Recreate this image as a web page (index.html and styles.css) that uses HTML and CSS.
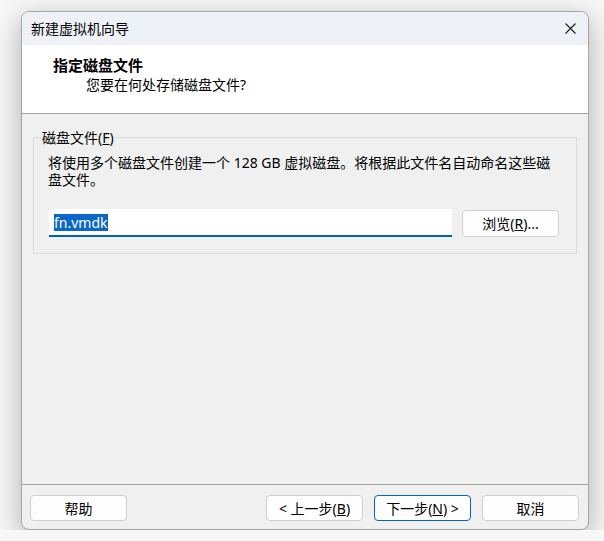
FILE: index.html
```html
<!DOCTYPE html>
<html lang="zh-CN">
<head>
    <meta charset="UTF-8">
    <title>新建虚拟机向导</title>
    <link rel="stylesheet" href="styles.css">
</head>
<body>
    <div class="window">
        <div class="titlebar">
            <span class="title">新建虚拟机向导</span>
            <svg class="close" width="11" height="11" viewBox="0 0 11 11">
                <path d="M0.5 0.5 L10.5 10.5 M10.5 0.5 L0.5 10.5" stroke="#1a1a1a" stroke-width="1.1" fill="none"/>
            </svg>
        </div>
        <div class="header">
            <div class="header-title">指定磁盘文件</div>
            <div class="header-sub">您要在何处存储磁盘文件?</div>
        </div>
        <div class="content">
            <fieldset class="group">
                <legend>磁盘文件(<u>F</u>)</legend>
                <p class="desc">将使用多个磁盘文件创建一个 128 GB 虚拟磁盘。将根据此文件名自动命名这些磁盘文件。</p>
                <div class="file-row">
                    <div class="file-input"><span class="sel">fn.vmdk</span></div>
                    <button class="btn">浏览(<u>R</u>)...</button>
                </div>
            </fieldset>
        </div>
        <div class="footer">
            <button class="btn">帮助</button>
            <div class="nav">
                <button class="btn">&lt; 上一步(<u>B</u>)</button>
                <button class="btn primary">下一步(<u>N</u>) &gt;</button>
                <button class="btn">取消</button>
            </div>
        </div>
    </div>
</body>
</html>
```

FILE: styles.css
```css
body {
    margin: 0;
    background-color: #f7f7f7;
    font-family: "Noto Sans", "Noto Sans CJK SC", sans-serif;
    font-size: 14px;
    color: #000;
}
.window {
    margin: 11px 0 0 21px;
    width: 568px;
    height: 519px;
    box-sizing: border-box;
    border: 1px solid #a6a6a6;
    border-radius: 8px;
    background-color: #f0f0f0;
    box-shadow: 0 8px 28px rgba(0, 0, 0, 0.3);
    display: flex;
    flex-direction: column;
    overflow: hidden;
}
.titlebar {
    height: 33px;
    flex: none;
    display: flex;
    align-items: center;
    justify-content: space-between;
    padding: 0 12px 0 9px;
    background-color: #eef2f7;
}
.title {
    line-height: 17px;
}
.header {
    height: 69px;
    box-sizing: border-box;
    flex: none;
    background-color: #fff;
    border-bottom: 1px solid #a0a0a0;
    padding: 11px 0 0 31px;
}
.header-title {
    font-size: 15px;
    font-weight: bold;
    line-height: 18px;
}
.header-sub {
    margin: 2px 0 0 33px;
    line-height: 18px;
}
.content {
    flex: 1;
    padding: 0 11px;
}
.group {
    margin: 15px 0 0 0;
    padding: 8px 17px 16px 14px;
    border: 1px solid #dcdcdc;
    min-inline-size: 0;
}
.group legend {
    padding: 0 1px;
    margin-left: -7px;
    line-height: 17px;
}
.desc {
    margin: 0 4px 0 0;
    line-height: 17px;
}
.file-row {
    display: flex;
    align-items: flex-end;
    gap: 10px;
    margin-top: 21px;
}
.file-input {
    width: 403px;
    height: 28px;
    margin-left: 1px;
    padding-left: 5px;
    box-sizing: border-box;
    background-color: #fff;
    border-bottom: 2px solid #005fb8;
    display: flex;
    align-items: center;
}
.sel {
    background-color: #0a66c9;
    color: #fff;
    line-height: 17px;
}
.btn {
    width: 97px;
    height: 27px;
    padding: 0;
    font-family: inherit;
    font-size: 14px;
    color: #000;
    background-color: #fdfdfd;
    border: 1px solid #d0d0d0;
    border-radius: 4px;
    line-height: 17px;
}
.footer {
    height: 45px;
    box-sizing: border-box;
    flex: none;
    border-top: 1px solid #a0a0a0;
    padding: 10px 9px 0 8px;
    display: flex;
    justify-content: space-between;
    align-items: flex-start;
}
.footer .btn {
    height: 26px;
}
.nav {
    display: flex;
    gap: 11px;
}
.primary {
    border-color: #0067c0;
}
```
